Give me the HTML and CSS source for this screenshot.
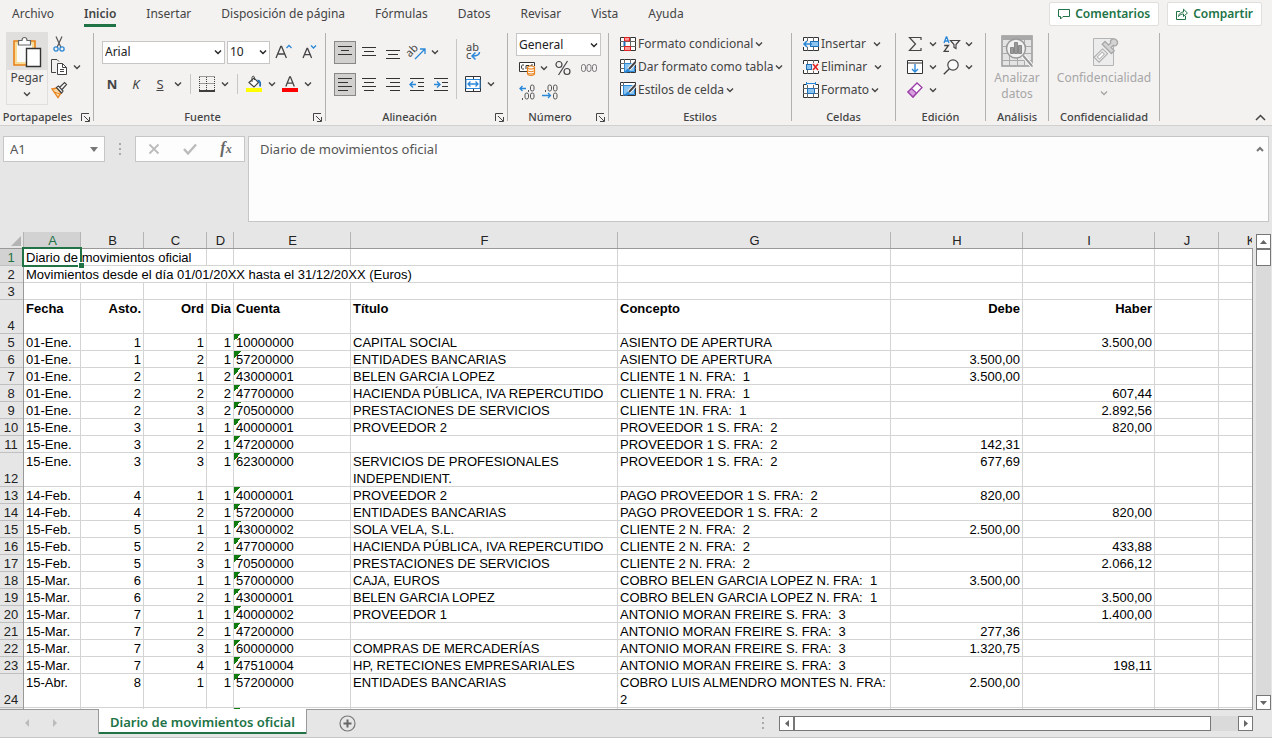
FILE: index.html
```html
<!DOCTYPE html>
<html lang="es">
<head>
<meta charset="utf-8">
<title>Diario de movimientos oficial</title>
<link rel="stylesheet" href="styles.css">
</head>
<body>
<svg class="defs" aria-hidden="true">
  <symbol id="chev" viewBox="0 0 8 8"><path d="M1 2.500 4 5.500 7 2.500" fill="none" stroke="currentColor" stroke-width="1.400"/></symbol>
  <symbol id="launch" viewBox="0 0 9 9"><path d="M.5 8V.5H8M3 3l5 5M8.500 4v4.500H4" fill="none" stroke="#444"/></symbol>
  <symbol id="grid" viewBox="0 0 16 14"><path d="M.5.5h15v13H.5z" fill="#fff" stroke="#333"/><path d="M0 4.500h16M0 9.500h16M4.500 0v14M10.500 0v14" stroke="#666" fill="none"/></symbol>
</svg>

<header class="ribbon">
  <div class="top">
    <nav class="tabs">
      <a href="#">Archivo</a>
      <a href="#" class="current">Inicio</a>
      <a href="#">Insertar</a>
      <a href="#">Disposición de página</a>
      <a href="#">Fórmulas</a>
      <a href="#">Datos</a>
      <a href="#">Revisar</a>
      <a href="#">Vista</a>
      <a href="#">Ayuda</a>
    </nav>
    <div class="actions">
      <button type="button"><svg width="12" height="12" viewBox="0 0 12 12"><path d="M.5 1.500h11v7H5L2.500 11V8.500h-2z" fill="none" stroke="#217346"/></svg>Comentarios</button>
      <button type="button"><svg width="12" height="12" viewBox="0 0 12 12"><path d="M4 3.500H.5v8h9V8M2.500 8.500C3 5.500 5 4 7.500 4V1.200L11.400 5 7.500 8.500V6C5.500 6 4 6.500 2.500 8.500z" fill="none" stroke="#217346"/></svg>Compartir</button>
    </div>
  </div>

  <div class="groups">
    <section class="group g-clip">
      <div class="body">
        <button type="button" class="paste">
          <span class="paste-icon"><svg width="30" height="32" viewBox="0 0 30 32"><path d="M2 5h21v24H2z" fill="#f8dc98" stroke="#e8811a" stroke-width="1.600"/><path d="M5 8h15v18H5z" fill="#fafafa"/><path d="M6.500 9V4.500H10c0-4 5-4 5 0h3.500V9z" fill="#fff" stroke="#666" stroke-width="1.200"/><path d="M14.500 12.500h14v18h-14z" fill="#fff" stroke="#333" stroke-width="1.400"/></svg></span>
          <span class="paste-text">Pegar<svg class="chev"><use href="#chev"/></svg></span>
        </button>
        <div class="stack">
          <div class="row"><button type="button" class="ib" aria-label="Cortar"><svg width="16" height="16" viewBox="0 0 16 16"><path d="M5 .5l5 11M11 .5 6 11.500" stroke="#555" fill="none" stroke-width="1.200"/><circle cx="5" cy="13" r="2.100" fill="none" stroke="#2b88d8" stroke-width="1.300"/><circle cx="11" cy="13" r="2.100" fill="none" stroke="#2b88d8" stroke-width="1.300"/></svg></button></div>
          <div class="row"><button type="button" class="ib" aria-label="Copiar"><svg width="16" height="16" viewBox="0 0 16 16"><path d="M5 13.500H.5V.5H6l2 2" fill="none" stroke="#444"/><path d="M6.500 4.500h5l4 4v7h-9z" fill="#fff" stroke="#444"/><path d="M11.500 4.500v4h4M9 10.500h4M9 12.500h4" fill="none" stroke="#444"/></svg></button><button type="button" class="drop" aria-label="Más copiar"><svg class="chev"><use href="#chev"/></svg></button></div>
          <div class="row"><button type="button" class="ib" aria-label="Copiar formato"><svg width="16" height="16" viewBox="0 0 16 16"><path d="M1 7l5-1 4 5-3 4.500z" fill="#f9d9a8" stroke="#e8811a" stroke-width="1.300"/><path d="M3 10l6 2" stroke="#e8811a"/><path d="M5.500 5.500l2-1.500L12 9l-1.500 2zM9 5l4.500-4.500L15.500 2.500 11 7.500" fill="#fff" stroke="#444" stroke-width="1.200"/></svg></button></div>
        </div>
      </div>
      <footer>Portapapeles<button type="button" class="launch" aria-label="Opciones de portapapeles"><svg width="9" height="9"><use href="#launch"/></svg></button></footer>
    </section>
    <i class="sep"></i>

    <section class="group g-font">
      <div class="body rows">
        <div class="row combos">
          <label class="combo w-font"><select aria-label="Fuente"><option>Arial</option></select><svg class="chev"><use href="#chev"/></svg></label>
          <label class="combo w-size"><select aria-label="Tamaño"><option>10</option></select><svg class="chev"><use href="#chev"/></svg></label>
          <button type="button" class="ib" aria-label="Aumentar fuente"><svg width="18" height="16" viewBox="0 0 18 16"><path d="M1 14 5.800 2.500h.8L11.400 14M2.800 10h6.800" fill="none" stroke="#444" stroke-width="1.300"/><path d="M11.500 4 14 1.500 16.500 4" fill="none" stroke="#2b88d8" stroke-width="1.300"/></svg></button>
          <button type="button" class="ib" aria-label="Disminuir fuente"><svg width="16" height="16" viewBox="0 0 16 16"><path d="M1 14 5 4.500h.6L9.600 14M2.500 10.700H8" fill="none" stroke="#444" stroke-width="1.300"/><path d="M9 1.500 11.500 4 14 1.500" fill="none" stroke="#2b88d8" stroke-width="1.300"/></svg></button>
        </div>
        <div class="row letters">
          <button type="button" class="ib"><b>N</b></button>
          <button type="button" class="ib"><em>K</em></button>
          <button type="button" class="ib"><u>S</u></button>
          <button type="button" class="drop" aria-label="Más subrayado"><svg class="chev"><use href="#chev"/></svg></button>
          <i class="bar"></i>
          <button type="button" class="ib" aria-label="Bordes"><svg width="16" height="16" viewBox="0 0 16 16"><path d="M.5.5h15M.5 7.500h15M.5 1v13M7.500 1v13M15.500 1v13" fill="none" stroke="#444" stroke-dasharray="1 1"/><path d="M0 15h16" stroke="#111" stroke-width="1.600"/></svg></button>
          <button type="button" class="drop" aria-label="Más bordes"><svg class="chev"><use href="#chev"/></svg></button>
          <i class="bar"></i>
          <button type="button" class="ib" aria-label="Color de relleno"><svg width="16" height="16" viewBox="0 0 16 16"><path d="M3 6.500 8 2l4.500 4.500L8 11z" fill="#fff" stroke="#444" stroke-width="1.200"/><path d="M6 6V1.500C6-.2 8.500-.2 8.500 1.500V4" fill="none" stroke="#444"/><path d="M11.500 4.500c3 0 3 3 2.500 6" fill="none" stroke="#1e6fb8" stroke-width="1.800"/><path d="M0 12h16v4H0z" fill="#ff0"/></svg></button>
          <button type="button" class="drop" aria-label="Más rellenos"><svg class="chev"><use href="#chev"/></svg></button>
          <button type="button" class="ib" aria-label="Color de fuente"><svg width="16" height="16" viewBox="0 0 16 16"><path d="M3.800 10.500 7.700.8h.7l3.900 9.700M5.200 7.200h5.700" fill="none" stroke="#444" stroke-width="1.300"/><path d="M0 12h16v4H0z" fill="red"/></svg></button>
          <button type="button" class="drop" aria-label="Más colores"><svg class="chev"><use href="#chev"/></svg></button>
        </div>
      </div>
      <footer>Fuente<button type="button" class="launch" aria-label="Opciones de fuente"><svg width="9" height="9"><use href="#launch"/></svg></button></footer>
    </section>
    <i class="sep"></i>

    <section class="group g-align">
      <div class="body">
        <div class="rows">
          <div class="row">
            <button type="button" class="ib on" aria-label="Alinear arriba"><svg width="16" height="16" viewBox="0 0 16 16"><path d="M1 2.500h14M4 6.500h8M1 10.500h14" stroke="#333"/></svg></button>
            <button type="button" class="ib" aria-label="Alinear en el medio"><svg width="16" height="16" viewBox="0 0 16 16"><path d="M1 3.500h14M3 7.500h10M1 11.500h14" stroke="#333"/></svg></button>
            <button type="button" class="ib" aria-label="Alinear abajo"><svg width="16" height="16" viewBox="0 0 16 16"><path d="M1 6.500h14M3 10.500h10M1 14.500h14" stroke="#333"/></svg></button>
            <button type="button" class="ib" aria-label="Orientación"><svg width="17" height="16" viewBox="0 0 17 16"><text x="-2" y="9" font-family="Noto Sans" font-size="11" fill="#444" transform="rotate(-45 5 8)">ab</text><path d="M6 15 15.500 5.500M11 5h5v5" fill="none" stroke="#2b88d8" stroke-width="1.300"/></svg></button>
            <button type="button" class="drop" aria-label="Más orientación"><svg class="chev"><use href="#chev"/></svg></button>
          </div>
          <div class="row">
            <button type="button" class="ib on" aria-label="Alinear a la izquierda"><svg width="16" height="16" viewBox="0 0 16 16"><path d="M1 2.500h14M1 6.500h10M1 10.500h14M1 14.500h10" stroke="#333"/></svg></button>
            <button type="button" class="ib" aria-label="Centrar"><svg width="16" height="16" viewBox="0 0 16 16"><path d="M1 2.500h14M3 6.500h10M1 10.500h14M3 14.500h10" stroke="#333"/></svg></button>
            <button type="button" class="ib" aria-label="Alinear a la derecha"><svg width="16" height="16" viewBox="0 0 16 16"><path d="M1 2.500h14M5 6.500h10M1 10.500h14M5 14.500h10" stroke="#333"/></svg></button>
            <button type="button" class="ib" aria-label="Disminuir sangría"><svg width="16" height="16" viewBox="0 0 16 16"><path d="M1 2.500h14M9 6.500h6M9 10.500h6M1 14.500h14" stroke="#333"/><path d="M7 8.500H1.500M4 5.500l-3 3 3 3" fill="none" stroke="#2b88d8" stroke-width="1.400"/></svg></button>
            <button type="button" class="ib" aria-label="Aumentar sangría"><svg width="16" height="16" viewBox="0 0 16 16"><path d="M1 2.500h14M9 6.500h6M9 10.500h6M1 14.500h14" stroke="#333"/><path d="M1 8.500h5.500M4 5.500l3 3-3 3" fill="none" stroke="#2b88d8" stroke-width="1.400"/></svg></button>
          </div>
        </div>
        <i class="bar tall"></i>
        <div class="rows">
          <div class="row"><button type="button" class="ib" aria-label="Ajustar texto"><svg width="16" height="18" viewBox="0 0 16 18"><text x="1" y="8" font-family="Noto Sans" font-size="11" fill="#444">ab</text><text x="1" y="16" font-family="Noto Sans" font-size="11" fill="#444">c</text><path d="M14.500 9c0 3-2 4-7 4M10.500 9.500 7 13l3.500 3.500" fill="none" stroke="#2b88d8" stroke-width="1.500"/></svg></button></div>
          <div class="row"><button type="button" class="ib" aria-label="Combinar y centrar"><svg width="16" height="16" viewBox="0 0 16 16"><path d="M.5.500h15v15H.5z" fill="#fff" stroke="#333"/><path d="M8.500 0v16" stroke="#333"/><path d="M1 3.500h14v9H1z" fill="#fff" stroke="#2b88d8"/><path d="M3 8h10M5.500 5.500 3 8l2.500 2.500M10.500 5.500 13 8l-2.500 2.500" fill="none" stroke="#2b88d8" stroke-width="1.300"/></svg></button><button type="button" class="drop" aria-label="Más combinar"><svg class="chev"><use href="#chev"/></svg></button></div>
        </div>
      </div>
      <footer>Alineación<button type="button" class="launch" aria-label="Opciones de alineación"><svg width="9" height="9"><use href="#launch"/></svg></button></footer>
    </section>
    <i class="sep"></i>

    <section class="group g-num">
      <div class="body">
        <label class="combo"><select aria-label="Formato de número"><option>General</option></select><svg class="chev"><use href="#chev"/></svg></label>
        <div class="row">
          <button type="button" class="ib" aria-label="Formato de contabilidad"><svg width="16" height="16" viewBox="0 0 16 16"><path d="M8 11.500H.5v-9h15V6" fill="#fff" stroke="#333"/><path d="M5 5H3.500Q2.500 5 2.500 7t1 2H5M7 9V5.500h3V7M12 6V5h2" fill="none" stroke="#333"/><path d="M8.500 7.500v6c0 2.500 7 2.500 7 0v-6z" fill="#fff" stroke="#e8811a" stroke-width="1.200"/><ellipse cx="12" cy="7.500" rx="3.500" ry="1.500" fill="#fff" stroke="#e8811a" stroke-width="1.200"/><path d="M8.500 10.500c1 1.600 6 1.600 7 0M8.500 12.800c1 1.600 6 1.600 7 0" fill="none" stroke="#e8811a"/></svg></button>
          <button type="button" class="drop" aria-label="Más monedas"><svg class="chev"><use href="#chev"/></svg></button>
          <button type="button" class="ib wide" aria-label="Estilo porcentual"><svg width="16" height="16" viewBox="0 0 16 16"><circle cx="4" cy="4.500" r="3" fill="none" stroke="#444" stroke-width="1.200"/><circle cx="12" cy="11.500" r="3" fill="none" stroke="#444" stroke-width="1.200"/><path d="M12.500 1 3.500 15" stroke="#444" stroke-width="1.200"/></svg></button>
          <button type="button" class="ib" aria-label="Estilo millares"><svg width="16" height="16" viewBox="0 0 16 16"><g fill="none" stroke="#777"><rect x=".5" y="4.500" width="4" height="7" rx="2"/><rect x="6" y="4.500" width="4" height="7" rx="2"/><rect x="11.500" y="4.500" width="4" height="7" rx="2"/></g></svg></button>
        </div>
        <div class="row">
          <button type="button" class="ib" aria-label="Aumentar decimales"><svg width="16" height="16" viewBox="0 0 16 16"><g fill="none" stroke="#555"><rect x="11.500" y="1" width="3.500" height="6" rx="1.700"/><rect x="6" y="9" width="3.500" height="6" rx="1.700"/><rect x="11.500" y="9" width="3.500" height="6" rx="1.700"/><path d="M9.500 6v2M3.500 14v2"/></g><path d="M7 4.500H1M3.500 2 1 4.500 3.500 7" fill="none" stroke="#2b88d8" stroke-width="1.300"/></svg></button>
          <button type="button" class="ib" aria-label="Disminuir decimales"><svg width="16" height="16" viewBox="0 0 16 16"><g fill="none" stroke="#555"><rect x="6" y="1" width="3.500" height="6" rx="1.700"/><rect x="11.500" y="1" width="3.500" height="6" rx="1.700"/><rect x="11.500" y="9" width="3.500" height="6" rx="1.700"/><path d="M3.500 6v2"/></g><path d="M0 11.500h8.500M6 9l2.500 2.500L6 14" fill="none" stroke="#2b88d8" stroke-width="1.300"/></svg></button>
        </div>
      </div>
      <footer>Número<button type="button" class="launch" aria-label="Opciones de número"><svg width="9" height="9"><use href="#launch"/></svg></button></footer>
    </section>
    <i class="sep"></i>

    <section class="group g-styles">
      <div class="body">
        <button type="button" class="cmd"><svg width="16" height="14" viewBox="0 0 16 14"><use href="#grid"/><path d="M4.500.500h5v3.500h-5zM4.500 9.500h6v4h-6z" fill="#ff9a9a" stroke="#e02020"/><path d="M4.500 4.500v4.500" stroke="#1e6fb8" stroke-width="2"/></svg>Formato condicional<svg class="chev"><use href="#chev"/></svg></button>
        <button type="button" class="cmd"><svg width="16" height="15" viewBox="0 0 16 15"><use href="#grid" width="16" height="14"/><path d="M4.500 4.500h10v8h-10z" fill="#8cc4f0" stroke="#2b88d8"/><path d="M15.500 3 9 10" stroke="#fff" stroke-width="4"/><path d="M15.500 3 9 10" stroke="#444" stroke-width="2"/><path d="M3 14c3 0 2-4 5-4s2 4-5 4z" fill="#2b88d8"/></svg>Dar formato como tabla<svg class="chev"><use href="#chev"/></svg></button>
        <button type="button" class="cmd"><svg width="16" height="15" viewBox="0 0 16 15"><path d="M.5.500h15v13H.5z" fill="#fff" stroke="#333"/><path d="M3.500 0v14M0 3.500h16" stroke="#666"/><path d="M3.500 3.500h11v9h-11z" fill="#8cc4f0" stroke="#2b88d8"/><path d="M15.500 3 9 10" stroke="#fff" stroke-width="4"/><path d="M15.500 3 9 10" stroke="#444" stroke-width="2"/><path d="M3 14c3 0 2-4 5-4s2 4-5 4z" fill="#2b88d8"/></svg>Estilos de celda<svg class="chev"><use href="#chev"/></svg></button>
      </div>
      <footer>Estilos</footer>
    </section>
    <i class="sep"></i>

    <section class="group g-cells">
      <div class="body">
        <button type="button" class="cmd spread"><svg width="16" height="14" viewBox="0 0 16 14"><use href="#grid"/><path d="M7.500 4.500h8v5h-8z" fill="#8cc4f0" stroke="#1e6fb8"/><path d="M0 4h7v6H0z" fill="#f3f2f1"/><path d="M9 7H1M4 4 1 7l3 3" fill="none" stroke="#2b88d8" stroke-width="1.500"/></svg>Insertar<svg class="chev"><use href="#chev"/></svg></button>
        <button type="button" class="cmd spread"><svg width="16" height="14" viewBox="0 0 16 14"><use href="#grid"/><path d="M9 3h7v8H9z" fill="#f3f2f1"/><path d="M0 4h3v6H0z" fill="#f3f2f1"/><path d="M3.500 4.500h5v5h-5z" fill="#8cc4f0" stroke="#1e6fb8"/><path d="M10 4l5 6M15 4l-5 6" stroke="#e02020" stroke-width="1.500"/></svg>Eliminar<svg class="chev"><use href="#chev"/></svg></button>
        <button type="button" class="cmd"><svg width="16" height="16" viewBox="0 0 16 16"><use href="#grid" y="2" width="16" height="14"/><path d="M4.500 6.500h7v5h-7z" fill="#8cc4f0" stroke="#1e6fb8"/><path d="M3 0h10v3H3z" fill="#f3f2f1"/><path d="M3.500 0v3M12.500 0v3M3 1.500h10" stroke="#2b88d8"/></svg>Formato<svg class="chev"><use href="#chev"/></svg></button>
      </div>
      <footer>Celdas</footer>
    </section>
    <i class="sep"></i>

    <section class="group g-edit">
      <div class="body">
        <div class="row">
          <button type="button" class="ib" aria-label="Autosuma"><svg width="16" height="16" viewBox="0 0 16 16"><path d="M14 4V1.500H2.500L8.500 8l-6 6.500H14V12" fill="none" stroke="#444" stroke-width="1.200"/></svg></button><button type="button" class="drop" aria-label="Más autosuma"><svg class="chev"><use href="#chev"/></svg></button>
          <button type="button" class="ib" aria-label="Ordenar y filtrar"><svg width="17" height="16" viewBox="0 0 17 16"><path d="M1 7 3.300.8h.4L6 7M1.800 5h3.400" fill="none" stroke="#2b88d8" stroke-width="1.300"/><path d="M1.200 9.500h4.300L1.200 15.300H6" fill="none" stroke="#444" stroke-width="1.300"/><path d="M7.500 4.500h9L13 8.500v4l-2-1v-3z" fill="none" stroke="#444" stroke-width="1.200"/></svg></button><button type="button" class="drop" aria-label="Más ordenar"><svg class="chev"><use href="#chev"/></svg></button>
        </div>
        <div class="row">
          <button type="button" class="ib" aria-label="Rellenar"><svg width="16" height="14" viewBox="0 0 16 14"><path d="M.5.500h15v13H.5zM0 3h16" fill="#fff" stroke="#333"/><path d="M8 4v8M5 9l3 3 3-3" fill="none" stroke="#2b88d8" stroke-width="1.400"/></svg></button><button type="button" class="drop" aria-label="Más rellenar"><svg class="chev"><use href="#chev"/></svg></button>
          <button type="button" class="ib" aria-label="Buscar"><svg width="16" height="16" viewBox="0 0 16 16"><circle cx="10" cy="6" r="5.200" fill="#fafafa" stroke="#444" stroke-width="1.200"/><path d="M6.300 9.700.8 15.200" stroke="#444" stroke-width="1.400"/></svg></button><button type="button" class="drop" aria-label="Más buscar"><svg class="chev"><use href="#chev"/></svg></button>
        </div>
        <div class="row">
          <button type="button" class="ib" aria-label="Borrar"><svg width="16" height="16" viewBox="0 0 16 16"><path d="M1 10 10 1l5 4.500L6 15z" fill="#fff" stroke="#9b3fa8" stroke-width="1.300"/><path d="M1 10l3.500-3.500L9.500 11 6 15z" fill="#d9a0e0" stroke="#9b3fa8" stroke-width="1.200"/></svg></button><button type="button" class="drop" aria-label="Más borrar"><svg class="chev"><use href="#chev"/></svg></button>
        </div>
      </div>
      <footer>Edición</footer>
    </section>
    <i class="sep"></i>

    <section class="group g-anal">
      <div class="body">
        <button type="button" class="big" disabled><svg width="32" height="32" viewBox="0 0 32 32"><path d="M1 1h30v30H1z" fill="#e4e4e4" stroke="#999" stroke-width="1.500"/><path d="M1 1h30v4H1z" fill="#a8a8a8"/><path d="M1 11.500h30M1 18.500h30M1 25.500h30M8.500 18v13M16.500 5v26M23.500 5v26" stroke="#aaa"/><circle cx="15" cy="13.500" r="9.500" fill="#f0f0f0" stroke="#999" stroke-width="1.500"/><path d="M9.500 12.500h3v6h-3zM13.500 7.500h3v11h-3zM17.500 10.500h3v8h-3z" fill="#999" stroke="#888"/><path d="M22 20.500 31 31" stroke="#fff" stroke-width="4"/><path d="M22 20.500 31 31" stroke="#999" stroke-width="2"/></svg><span>Analizar<br>datos</span></button>
      </div>
      <footer>Análisis</footer>
    </section>
    <i class="sep"></i>

    <section class="group g-conf">
      <div class="body">
        <button type="button" class="big" disabled><svg width="32" height="32" viewBox="0 0 32 32"><path d="M5.500 3.500h20v27h-20z" fill="#ececec" stroke="#b4b4b4"/><g transform="rotate(-45 16 16)"><path d="M4.500 13.500h12v7h-12z" fill="#ececec" stroke="#a8a8a8"/><path d="M7 15.500h7v3H7z" fill="#fff" stroke="#b4b4b4"/><path d="M19.500 10v13h4v-4.500h3c1 3.500 6 2.500 6-1.500s-5-5-6-2h-3V10z" fill="#d4d4d4" stroke="#a8a8a8" stroke-width="1.300"/></g></svg><span>Confidencialidad</span><svg class="chev"><use href="#chev"/></svg></button>
      </div>
      <footer>Confidencialidad</footer>
    </section>
    <i class="sep"></i>
    <button type="button" class="collapse" aria-label="Contraer la cinta"><svg width="11" height="7" viewBox="0 0 11 7"><path d="M1 6l4.500-4.500L10 6" fill="none" stroke="#444" stroke-width="1.500"/></svg></button>
  </div>
</header>

<section class="formula">
  <div class="namebox"><input type="text" value="A1" aria-label="Cuadro de nombres"><button type="button" aria-label="Nombres"><svg width="8" height="5" viewBox="0 0 8 5"><path d="M0 0h8L4 5z" fill="#777"/></svg></button></div>
  <svg class="dots" width="3" height="12" viewBox="0 0 3 12"><path d="M0 0h2v2H0zM0 5h2v2H0zM0 10h2v2H0z" fill="#aaa"/></svg>
  <div class="fxbar">
    <button type="button" aria-label="Cancelar"><svg width="12" height="12" viewBox="0 0 12 12"><path d="M1.500 1.500l9 9M10.500 1.500l-9 9" stroke="#bbb" stroke-width="1.800"/></svg></button>
    <button type="button" aria-label="Introducir"><svg width="14" height="12" viewBox="0 0 14 12"><path d="M1 6l4 4.500L13 1.500" fill="none" stroke="#bbb" stroke-width="2.400"/></svg></button>
    <button type="button" class="fx" aria-label="Insertar función">f<small>x</small></button>
  </div>
  <div class="fbox"><textarea aria-label="Barra de fórmulas">Diario de movimientos oficial</textarea><button type="button" aria-label="Contraer barra de fórmulas"><svg width="8" height="6" viewBox="0 0 8 6"><path d="M1 5l3-3 3 3" fill="none" stroke="#777" stroke-width="2"/></svg></button></div>
</section>

<main class="sheet">
  <div class="cells">
    <table>
      <colgroup><col class="c-row"><col class="c-a"><col class="c-b"><col class="c-b"><col class="c-d"><col class="c-e"><col class="c-f"><col class="c-g"><col class="c-h"><col class="c-h"><col class="c-j"><col class="c-j"></colgroup>
      <thead><tr><th class="corner"><svg width="10" height="10" viewBox="0 0 10 10"><path d="M10 0v10H0z" fill="#b4b4b4"/></svg></th><th class="on">A</th><th>B</th><th>C</th><th>D</th><th>E</th><th>F</th><th>G</th><th>H</th><th>I</th><th>J</th><th>K</th></tr></thead>
      <tbody>
        <tr><th class="on">1</th><td colspan="3" class="active">Diario de movimientos oficial</td><td></td><td></td><td></td><td></td><td></td><td></td><td></td><td></td></tr>
        <tr><th>2</th><td colspan="6">Movimientos desde el día 01/01/20XX hasta el 31/12/20XX (Euros)</td><td></td><td></td><td></td><td></td><td></td></tr>
        <tr><th>3</th><td></td><td></td><td></td><td></td><td></td><td></td><td></td><td></td><td></td><td></td><td></td></tr>
        <tr class="tall heads"><th>4</th><td>Fecha</td><td class="n">Asto.</td><td class="n">Ord</td><td class="n">Dia</td><td>Cuenta</td><td>Título</td><td>Concepto</td><td class="n">Debe</td><td class="n">Haber</td><td></td><td></td></tr>
        <tr><th>5</th><td>01-Ene.</td><td class="n">1</td><td class="n">1</td><td class="n">1</td><td class="f">10000000</td><td>CAPITAL SOCIAL</td><td>ASIENTO DE APERTURA</td><td></td><td class="n">3.500,00</td><td></td><td></td></tr>
        <tr><th>6</th><td>01-Ene.</td><td class="n">1</td><td class="n">2</td><td class="n">1</td><td class="f">57200000</td><td>ENTIDADES BANCARIAS</td><td>ASIENTO DE APERTURA</td><td class="n">3.500,00</td><td></td><td></td><td></td></tr>
        <tr><th>7</th><td>01-Ene.</td><td class="n">2</td><td class="n">1</td><td class="n">2</td><td class="f">43000001</td><td>BELEN GARCIA LOPEZ</td><td>CLIENTE 1 N. FRA:  1</td><td class="n">3.500,00</td><td></td><td></td><td></td></tr>
        <tr><th>8</th><td>01-Ene.</td><td class="n">2</td><td class="n">2</td><td class="n">2</td><td class="f">47700000</td><td>HACIENDA PÚBLICA, IVA REPERCUTIDO</td><td>CLIENTE 1 N. FRA:  1</td><td></td><td class="n">607,44</td><td></td><td></td></tr>
        <tr><th>9</th><td>01-Ene.</td><td class="n">2</td><td class="n">3</td><td class="n">2</td><td class="f">70500000</td><td>PRESTACIONES DE SERVICIOS</td><td>CLIENTE 1N. FRA:  1</td><td></td><td class="n">2.892,56</td><td></td><td></td></tr>
        <tr><th>10</th><td>15-Ene.</td><td class="n">3</td><td class="n">1</td><td class="n">1</td><td class="f">40000001</td><td>PROVEEDOR 2</td><td>PROVEEDOR 1 S. FRA:  2</td><td></td><td class="n">820,00</td><td></td><td></td></tr>
        <tr><th>11</th><td>15-Ene.</td><td class="n">3</td><td class="n">2</td><td class="n">1</td><td class="f">47200000</td><td></td><td>PROVEEDOR 1 S. FRA:  2</td><td class="n">142,31</td><td></td><td></td><td></td></tr>
        <tr class="tall"><th>12</th><td>15-Ene.</td><td class="n">3</td><td class="n">3</td><td class="n">1</td><td class="f">62300000</td><td>SERVICIOS DE PROFESIONALES INDEPENDIENT.</td><td>PROVEEDOR 1 S. FRA:  2</td><td class="n">677,69</td><td></td><td></td><td></td></tr>
        <tr><th>13</th><td>14-Feb.</td><td class="n">4</td><td class="n">1</td><td class="n">1</td><td class="f">40000001</td><td>PROVEEDOR 2</td><td>PAGO PROVEEDOR 1 S. FRA:  2</td><td class="n">820,00</td><td></td><td></td><td></td></tr>
        <tr><th>14</th><td>14-Feb.</td><td class="n">4</td><td class="n">2</td><td class="n">1</td><td class="f">57200000</td><td>ENTIDADES BANCARIAS</td><td>PAGO PROVEEDOR 1 S. FRA:  2</td><td></td><td class="n">820,00</td><td></td><td></td></tr>
        <tr><th>15</th><td>15-Feb.</td><td class="n">5</td><td class="n">1</td><td class="n">1</td><td class="f">43000002</td><td>SOLA VELA, S.L.</td><td>CLIENTE 2 N. FRA:  2</td><td class="n">2.500,00</td><td></td><td></td><td></td></tr>
        <tr><th>16</th><td>15-Feb.</td><td class="n">5</td><td class="n">2</td><td class="n">1</td><td class="f">47700000</td><td>HACIENDA PÚBLICA, IVA REPERCUTIDO</td><td>CLIENTE 2 N. FRA:  2</td><td></td><td class="n">433,88</td><td></td><td></td></tr>
        <tr><th>17</th><td>15-Feb.</td><td class="n">5</td><td class="n">3</td><td class="n">1</td><td class="f">70500000</td><td>PRESTACIONES DE SERVICIOS</td><td>CLIENTE 2 N. FRA:  2</td><td></td><td class="n">2.066,12</td><td></td><td></td></tr>
        <tr><th>18</th><td>15-Mar.</td><td class="n">6</td><td class="n">1</td><td class="n">1</td><td class="f">57000000</td><td>CAJA, EUROS</td><td>COBRO BELEN GARCIA LOPEZ N. FRA:  1</td><td class="n">3.500,00</td><td></td><td></td><td></td></tr>
        <tr><th>19</th><td>15-Mar.</td><td class="n">6</td><td class="n">2</td><td class="n">1</td><td class="f">43000001</td><td>BELEN GARCIA LOPEZ</td><td>COBRO BELEN GARCIA LOPEZ N. FRA:  1</td><td></td><td class="n">3.500,00</td><td></td><td></td></tr>
        <tr><th>20</th><td>15-Mar.</td><td class="n">7</td><td class="n">1</td><td class="n">1</td><td class="f">40000002</td><td>PROVEEDOR 1</td><td>ANTONIO MORAN FREIRE S. FRA:  3</td><td></td><td class="n">1.400,00</td><td></td><td></td></tr>
        <tr><th>21</th><td>15-Mar.</td><td class="n">7</td><td class="n">2</td><td class="n">1</td><td class="f">47200000</td><td></td><td>ANTONIO MORAN FREIRE S. FRA:  3</td><td class="n">277,36</td><td></td><td></td><td></td></tr>
        <tr><th>22</th><td>15-Mar.</td><td class="n">7</td><td class="n">3</td><td class="n">1</td><td class="f">60000000</td><td>COMPRAS DE MERCADERÍAS</td><td>ANTONIO MORAN FREIRE S. FRA:  3</td><td class="n">1.320,75</td><td></td><td></td><td></td></tr>
        <tr><th>23</th><td>15-Mar.</td><td class="n">7</td><td class="n">4</td><td class="n">1</td><td class="f">47510004</td><td>HP, RETECIONES EMPRESARIALES</td><td>ANTONIO MORAN FREIRE S. FRA:  3</td><td></td><td class="n">198,11</td><td></td><td></td></tr>
        <tr class="tall"><th>24</th><td>15-Abr.</td><td class="n">8</td><td class="n">1</td><td class="n">1</td><td class="f">57200000</td><td>ENTIDADES BANCARIAS</td><td>COBRO LUIS ALMENDRO MONTES N. FRA:  2</td><td class="n">2.500,00</td><td></td><td></td><td></td></tr>
        <tr><th></th><td></td><td></td><td></td><td></td><td class="f"></td><td></td><td></td><td></td><td></td><td></td><td></td></tr>
      </tbody>
    </table>
  </div>
  <div class="gutter">
    <div class="vscroll">
      <button type="button" aria-label="Subir"><svg width="7" height="4" viewBox="0 0 7 4"><path d="M0 4h7L3.500 0z" fill="#666"/></svg></button>
      <div class="thumb"></div>
      <button type="button" class="end" aria-label="Bajar"><svg width="7" height="4" viewBox="0 0 7 4"><path d="M0 0h7L3.500 4z" fill="#666"/></svg></button>
    </div>
  </div>
</main>

<footer class="bottom">
  <div class="navs">
    <button type="button" aria-label="Hoja anterior"><svg width="4" height="8" viewBox="0 0 4 8"><path d="M4 0v8L0 4z" fill="#bbb"/></svg></button>
    <button type="button" aria-label="Hoja siguiente"><svg width="4" height="8" viewBox="0 0 4 8"><path d="M0 0v8l4-4z" fill="#bbb"/></svg></button>
  </div>
  <button type="button" class="sheettab">Diario de movimientos oficial</button>
  <button type="button" class="add" aria-label="Hoja nueva"><svg width="17" height="17" viewBox="0 0 17 17"><circle cx="8.500" cy="8.500" r="7.500" fill="none" stroke="#777" stroke-width="1.200"/><path d="M8.500 4.500v8M4.500 8.500h8" stroke="#666" stroke-width="2"/></svg></button>
  <svg class="dots" width="3" height="12" viewBox="0 0 3 12"><path d="M0 0h2v2H0zM0 5h2v2H0zM0 10h2v2H0z" fill="#aaa"/></svg>
  <div class="hscroll">
    <button type="button" aria-label="Izquierda"><svg width="4" height="7" viewBox="0 0 4 7"><path d="M4 0v7L0 3.500z" fill="#666"/></svg></button>
    <div class="thumb"></div>
    <button type="button" class="end" aria-label="Derecha"><svg width="4" height="7" viewBox="0 0 4 7"><path d="M0 0v7l4-3.500z" fill="#666"/></svg></button>
  </div>
</footer>
</body>
</html>
```

FILE: styles.css
```css
*, *::before, *::after { box-sizing: border-box; }

body {
  margin: 0;
  height: 100vh;
  display: flex;
  flex-direction: column;
  overflow: hidden;
  background: #e6e6e6;
  color: #444;
  font: 12px/16px "Noto Sans", "Open Sans", sans-serif;
}

button, select, input, textarea { font: inherit; color: inherit; margin: 0; }
button { display: inline-flex; align-items: center; justify-content: center; padding: 0; border: 0; background: none; }
svg { display: block; flex: none; overflow: visible; }
.defs { position: absolute; width: 0; height: 0; }
.chev { width: 8px; height: 8px; }

/* Ribbon */
.ribbon { background: #f3f2f1; border-bottom: 1px solid #d2d0ce; }
.top { display: flex; justify-content: space-between; height: 32px; padding: 2px 10px 0 12px; }
.tabs { display: flex; gap: 30px; padding-top: 2px; }
.tabs a { height: 23px; line-height: 20px; color: #444; text-decoration: none; white-space: nowrap; }
.tabs .current { border-bottom: 3px solid #217346; font-weight: 600; }
.actions { display: flex; gap: 8px; }
.actions button { height: 24px; padding: 0 8px; gap: 5px; background: #fff; border: 1px solid #e1dfdd; border-radius: 2px; color: #217346; font-weight: 600; }

.groups { display: flex; height: 93px; }
.sep { width: 1px; height: 88px; margin-top: 1px; background: #b3b0ad; }
.group { display: flex; flex-direction: column; flex: none; }
.group .body { flex: 1; }
.group footer { position: relative; height: 16px; text-align: center; font-size: 11px; font-weight: 500; }
.launch { position: absolute; right: 2px; top: 4px; width: 11px; height: 9px; }
.rows { display: flex; flex-direction: column; gap: 8px; padding-top: 8px; }
.row { display: flex; align-items: center; height: 24px; }
.ib { width: 24px; height: 24px; }
.ib.on { width: 22px; height: 23px; margin: 0 1px; background: #d2d0ce; border: 1px solid #8a8886; }
.drop { width: 12px; height: 24px; }
.bar { width: 1px; height: 20px; margin: 0 4px 0 6px; background: #c8c6c4; }

.combo { display: grid; align-items: center; height: 23px; background: #fff; border: 1px solid #c8c6c4; color: #222; }
.combo > * { grid-area: 1 / 1; }
.combo .chev { justify-self: end; margin-right: 2px; pointer-events: none; }
.combo select { width: 100%; height: 21px; padding: 0 2px; border: 0; background: none; appearance: none; }

.g-clip { width: 93px; }
.g-clip .body { display: flex; padding-left: 6px; }
.g-clip footer { padding-right: 18px; }
.paste { flex-direction: column; width: 42px; height: 73px; border: 1px solid #e1dfdd; }
.paste-icon { display: grid; place-items: center; width: 100%; height: 37px; background: #e1dfdd; }
.paste-text { display: flex; flex: 1; flex-direction: column; align-items: center; gap: 4px; }
.stack { margin-left: -1px; }
.stack .row { height: 23px; }

.g-font { width: 231px; }
.g-font .rows { padding-left: 6px; }
.g-font footer { padding-right: 14px; }
.combos { padding-left: 2px; gap: 2px; }
.w-font { width: 123px; }
.w-size { width: 43px; }
.letters { font-size: 13px; }

.g-align { width: 181px; }
.g-align .body { display: flex; padding-left: 7px; }
.g-align footer { padding-right: 14px; }
.bar.tall { height: 60px; margin: 7px 4px 0 3px; }

.g-num { width: 100px; }
.g-num .body { padding: 1px 7px 0 8px; }
.g-num footer { padding-right: 16px; }
.g-num .ib:first-child { width: 22px; }
.g-num .wide { width: 28px; }

.g-styles { width: 182px; }
.g-styles .body, .g-cells .body { display: flex; flex-direction: column; align-items: flex-start; padding-left: 11px; }
.cmd { height: 23px; gap: 2px; white-space: nowrap; }
.g-cells { width: 103px; }
.spread .chev { margin-left: 5px; }

.g-edit { width: 89px; }
.g-edit .body { padding-left: 7px; }
.g-edit .row { height: 23px; }

.g-anal { width: 62px; }
.g-conf { width: 110px; }
.big { flex-direction: column; justify-content: flex-start; width: 100%; padding-top: 3px; color: #a6a6a6; }
.big span { margin-top: 3px; }
.big .chev { margin-top: 3px; }
.collapse { align-self: flex-end; margin: 0 6px 4px auto; }

/* Formula bar */
.formula { display: flex; align-items: flex-start; padding: 10px 3px 10px; color: #555; }
.namebox, .fxbar, .fbox { display: flex; background: #fdfdfd; border: 1px solid #c6c6c6; }
.namebox { width: 102px; height: 26px; }
.namebox input { flex: 1; min-width: 0; padding: 0 6px; border: 0; background: none; font-size: 13px; }
.namebox button { width: 20px; }
.formula .dots { margin: 7px 13px 0 14px; }
.fxbar { width: 110px; height: 26px; justify-content: space-around; }
.fxbar button { width: 24px; }
.fxbar .fx { align-items: baseline; font: italic bold 16px/22px "Liberation Serif", serif; color: #666; }
.fx small { font-size: 12px; }
.fbox { flex: 1; height: 86px; margin-left: 3px; }
.fbox textarea { flex: 1; padding: 3px 11px; border: 0; background: none; resize: none; font-size: 13px; line-height: 18px; }
.fbox button { width: 16px; height: 24px; }

/* Sheet */
.sheet { display: flex; flex: 1; min-height: 0; }
.cells { flex: 1; min-width: 0; overflow: hidden; border-bottom: 1px solid #999; }
table { width: 1283px; table-layout: fixed; border-collapse: separate; border-spacing: 0; font: 13px/17px "Liberation Sans", Arial, sans-serif; color: #000; }
.c-row { width: 24px; }
.c-a { width: 57px; }
.c-b { width: 63px; }
.c-d { width: 27px; }
.c-e { width: 117px; }
.c-f { width: 267px; }
.c-g { width: 273px; }
.c-h { width: 132px; }
.c-j { width: 64px; }
th { height: 17px; padding: 0; background: #e6e6e6; color: #222; font-weight: normal; vertical-align: bottom; }
thead th { box-shadow: inset 0 -1px #999, inset -1px 0 #b4b4b4; }
tbody th { padding-right: 2px; box-shadow: inset -1px 0 #999, inset 0 -1px #c0c0c0; }
th.on { background: #d2d2d2; color: #217346; }
.corner svg { margin: 0 0 3px 11px; }
td { height: 17px; padding: 0 1px 0 2px; background-color: #fff; box-shadow: inset -1px -1px #d4d4d4; vertical-align: top; white-space: pre-wrap; }
.tall > * { height: 34px; }
.heads td { font-weight: bold; }
.n { padding: 0 3px 0 0; text-align: right; }
.f { background-image: linear-gradient(135deg, #107c10 50%, transparent 50%); background-size: 7px 7px; background-repeat: no-repeat; }
.active { position: relative; }
.active::before { content: ""; position: absolute; left: -2px; top: -2px; width: 60px; height: 20px; border: 2px solid #217346; }
.active::after { content: ""; position: absolute; left: 54px; top: 13px; width: 6px; height: 6px; background: #217346; border: solid #fff; border-width: 1px 0 0 1px; }

.gutter { display: flex; width: 20px; padding: 2px 1px 0 4px; background: linear-gradient(#999, #999) 0 16px / 1px 100% no-repeat; }
.vscroll, .hscroll { display: flex; background: #dadada; }
.vscroll { flex-direction: column; width: 15px; }
.vscroll button, .hscroll button, .thumb { background: #fff; border: 1px solid #777; }
.vscroll button, .hscroll button { width: 15px; height: 15px; }
.vscroll .thumb { height: 17px; }
.vscroll .end { margin-top: auto; }

/* Sheet tabs */
.bottom { display: flex; align-items: flex-start; height: 28px; border-bottom: 1px solid #c6c6c6; }
.navs { display: flex; gap: 24px; width: 98px; padding: 9px 0 0 25px; }
.sheettab { position: relative; height: 25px; margin-top: -1px; padding: 0 11px; background: #fff; border: solid #999; border-width: 0 1px; box-shadow: inset 0 -2px #217346; color: #217346; font-size: 13px; font-weight: 600; }
.add { margin: 5px 0 0 32px; }
.bottom .dots { margin: 7px 14px 0 auto; }
.hscroll { width: calc(37% + 3px); margin: 6px 19px 0 0; }
.hscroll .thumb { width: 88%; height: 15px; }
.hscroll .end { margin-left: auto; }
```
